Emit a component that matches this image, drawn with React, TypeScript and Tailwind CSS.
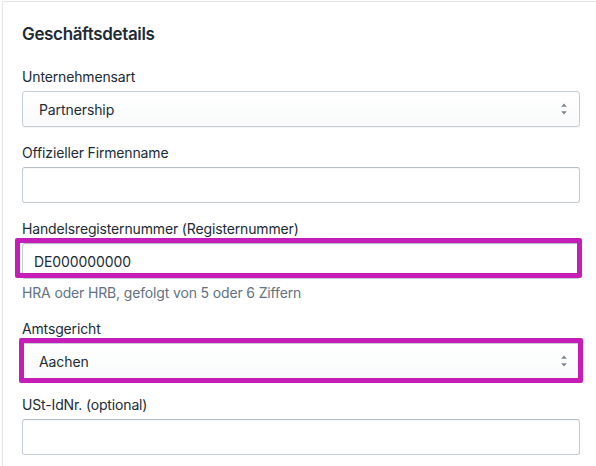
import React from "react";

const font = { fontFamily: "Inter, 'Liberation Sans', sans-serif" };

function Arrows() {
  return (
    <svg width="20" height="20" viewBox="0 0 20 20" className="absolute right-[5px] top-1/2 -translate-y-1/2 w-[20px] h-[20px] text-[#7a8692]" fill="currentColor">
      <path d="M10 15.5l-2.8-3.2h5.6L10 15.5zm0-11l2.8 3.2H7.2L10 4.5z" />
    </svg>
  );
}

function Label({ children }: { children: React.ReactNode }) {
  return <div className="text-[14px] leading-5 tracking-[-0.15px] text-[#212b36] mb-1">{children}</div>;
}

function TextInput({ value }: { value?: string }) {
  return (
    <div className="h-[36px] w-full rounded-[3px] border border-[#c4cdd5] border-t-[#b5bec7] bg-white shadow-[inset_0_1px_0_0_rgba(99,115,129,0.05)] flex items-center px-[11px] text-[14px] tracking-[-0.1px] text-[#212b36]">
      {value}
    </div>
  );
}

function Select({ value }: { value: string }) {
  return (
    <div className="relative h-[36px] w-full rounded-[3px] border border-[#c4cdd5] bg-gradient-to-b from-white to-[#f9fafb] shadow-[0_1px_0_0_rgba(22,29,37,0.05)] flex items-center pl-[16px] text-[14px] tracking-[-0.1px] text-[#212b36]">
      {value}
      <Arrows />
    </div>
  );
}

export default function App() {
  return (
    <div className="w-[596px] h-[466px] overflow-hidden bg-white relative" style={font}>
      <div className="ml-[2px] mt-[1px] w-[598px] h-[480px] border-l border-t border-[#e3e6e9] bg-white pl-[19px] pr-5 pt-[20px]">
        <h2 className="text-[17px] leading-6 font-semibold tracking-[-0.35px] text-[#212b36]">Geschäftsdetails</h2>
        <div className="mt-[21px] flex flex-col gap-4 w-[558px]">
          <div>
            <Label>Unternehmensart</Label>
            <Select value="Partnership" />
          </div>
          <div>
            <Label>Offizieller Firmenname</Label>
            <TextInput />
          </div>
          <div>
            <Label>Handelsregisternummer (Registernummer)</Label>
            <div className="relative">
              <TextInput value="DE000000000" />
              <div className="absolute left-[-7px] top-[-5px] w-[567px] h-[40px] border-[5px] border-[#c71db8] rounded-[2px]" />
            </div>
            <div className="mt-1 text-[14px] leading-5 tracking-[-0.15px] text-[#637381]">HRA oder HRB, gefolgt von 5 oder 6 Ziffern</div>
          </div>
          <div>
            <Label>Amtsgericht</Label>
            <div className="relative">
              <Select value="Aachen" />
              <div className="absolute left-[-3px] top-[-5px] w-[564px] h-[45px] border-[5px] border-[#c71db8] rounded-[2px]" />
            </div>
          </div>
          <div>
            <Label>USt-IdNr. (optional)</Label>
            <TextInput />
          </div>
        </div>
      </div>
    </div>
  );
}
